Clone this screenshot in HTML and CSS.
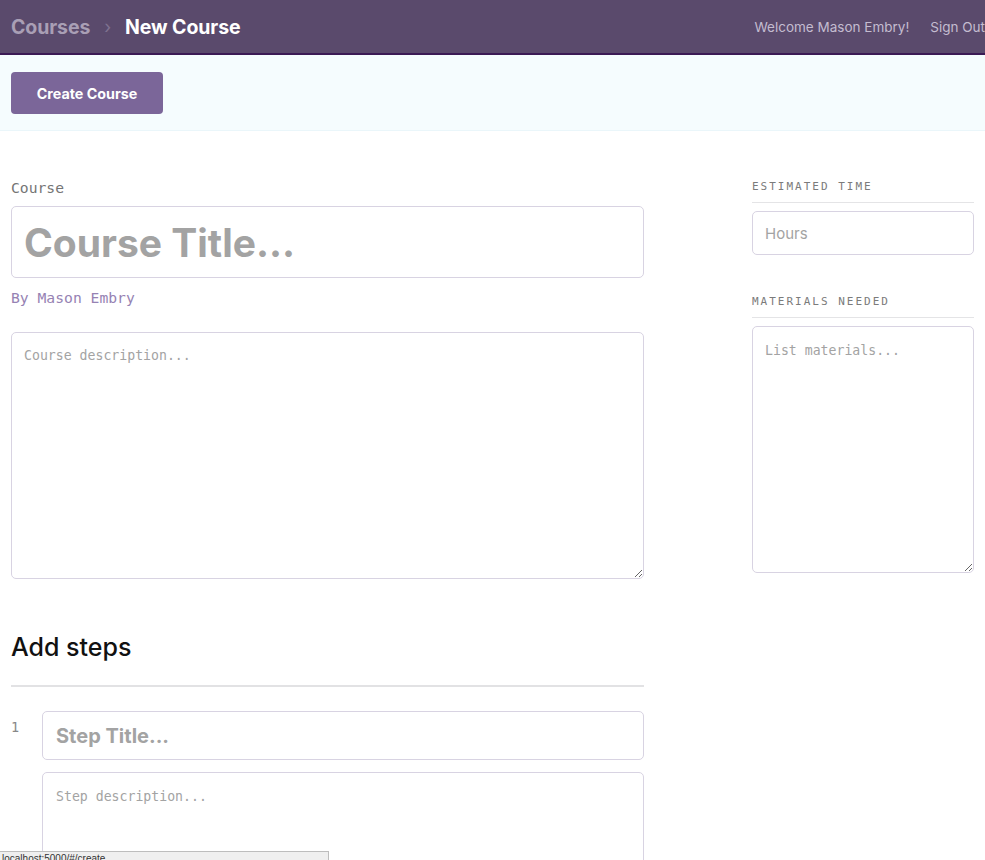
FILE: index.html
```html
<!DOCTYPE html>
<html>
<head>
<meta charset="utf-8">
<link rel="stylesheet" href="styles.css">
</head>
<body>
<header class="topbar">
  <nav class="crumbs">
    <a class="crumb-link">Courses</a>
    <span class="crumb-sep">›</span>
    <span class="crumb-current">New Course</span>
  </nav>
  <div class="user-nav">
    <span class="welcome">Welcome Mason Embry!</span>
    <a class="signout">Sign Out</a>
  </div>
</header>
<div class="actions">
  <button class="btn-primary">Create Course</button>
</div>
<main class="layout">
  <section class="main-col">
    <div class="label">Course</div>
    <input class="title-input" placeholder="Course Title...">
    <div class="byline">By Mason Embry</div>
    <textarea class="desc" placeholder="Course description..."></textarea>
    <h2 class="steps-heading">Add steps</h2>
    <div class="step">
      <div class="step-num">1</div>
      <div class="step-fields">
        <input class="step-title" placeholder="Step Title...">
        <textarea class="step-desc" placeholder="Step description..."></textarea>
      </div>
    </div>
  </section>
  <aside class="side-col">
    <div class="side-block">
      <h4 class="side-heading">Estimated Time</h4>
      <input class="hours" placeholder="Hours">
    </div>
    <div class="side-block">
      <h4 class="side-heading">Materials Needed</h4>
      <textarea class="materials" placeholder="List materials..."></textarea>
    </div>
  </aside>
</main>
<div class="statusbar">localhost:5000/#/create</div>
</body>
</html>
```
FILE: styles.css
```css
html, body { margin: 0; padding: 0; }
body {
  font-family: "Inter", "Noto Sans", sans-serif;
  background: #fff;
  overflow: hidden;
  width: 985px;
  height: 860px;
}
.topbar {
  height: 53px;
  background: #5a4a6c;
  border-bottom: 2px solid #3b1a55;
  display: flex;
  align-items: center;
  justify-content: space-between;
  padding: 0 0 0 11px;
  white-space: nowrap;
}
.crumbs { display: flex; align-items: center; font-weight: 700; font-size: 19.5px; letter-spacing: -0.1px; }
.crumb-link { color: #a99fb5; }
.crumb-sep { color: #7f7290; font-weight: 400; font-size: 18px; margin: 0 14px 0 14px; }
.crumb-current { color: #fff; }
.user-nav { display: flex; gap: 21px; font-size: 13.5px; color: #c4bcd0; margin-right: 0; }
.actions {
  height: 76px;
  background: #f5fcfe;
  border-bottom: 1px solid #eaf6fa;
  padding: 17px 11px 0;
  box-sizing: border-box;
}
.btn-primary {
  width: 152px;
  height: 42px;
  background: #7b6699;
  border: none;
  border-radius: 4px;
  color: #fff;
  font-family: inherit;
  font-weight: 700;
  font-size: 14.3px;
}
.layout {
  display: grid;
  grid-template-columns: 633px 222px;
  column-gap: 108px;
  padding: 49px 11px 0;
}
.main-col { margin-top: -1px; }
.label {
  font-family: "DejaVu Sans Mono", monospace;
  font-size: 14.7px;
  color: #757575;
  line-height: 18px;
}
input, textarea {
  box-sizing: border-box;
  border: 1px solid #d8d3e2;
  border-radius: 5px;
  outline: none;
  background: #fff;
  display: block;
  width: 100%;
  margin: 0;
}
input::placeholder, textarea::placeholder { color: #a3a3a3; opacity: 1; }
.title-input {
  margin-top: 9px;
  height: 72px;
  padding: 0 12px;
  font-family: "Inter", sans-serif;
  font-weight: 700;
  font-size: 39px;
}
.byline {
  font-family: "DejaVu Sans Mono", monospace;
  font-size: 14.7px;
  color: #9682b3;
  margin-top: 11px;
  line-height: 18px;
}
.desc {
  margin-top: 25px;
  height: 247px;
  padding: 15px 12px;
  font-family: "DejaVu Sans Mono", monospace;
  font-size: 13.2px;
  resize: vertical;
}
.steps-heading {
  margin: 48px 0 0;
  font-size: 25px;
  font-weight: 500;
  line-height: 40px;
  color: #111;
  padding-bottom: 18px;
  border-bottom: 2px solid #e2e2e4;
}
.step { display: flex; margin-top: 24px; }
.step-num {
  width: 31px;
  flex: none;
  font-family: "DejaVu Sans Mono", monospace;
  font-size: 13.5px;
  color: #888;
  padding-top: 8px;
}
.step-fields { flex: 1; }
.step-title {
  height: 49px;
  padding: 0 13px;
  font-family: "Inter", sans-serif;
  font-weight: 700;
  font-size: 20px;
}
.step-desc {
  margin-top: 12px;
  height: 120px;
  padding: 16px 13px;
  font-family: "DejaVu Sans Mono", monospace;
  font-size: 13.2px;
}
.side-block { margin-bottom: 40px; }
.side-heading {
  margin: 0;
  font-family: "DejaVu Sans Mono", monospace;
  font-weight: 400;
  font-size: 11px;
  letter-spacing: 2px;
  text-transform: uppercase;
  color: #7b7b7b;
  line-height: 14px;
  padding-bottom: 8px;
  border-bottom: 1px solid #e4e4e6;
}
.hours {
  margin-top: 8px;
  height: 44px;
  padding: 0 12px;
  font-family: "Inter", sans-serif;
  font-size: 15px;
}
.materials {
  margin-top: 8px;
  height: 247px;
  padding: 16px 12px;
  font-family: "DejaVu Sans Mono", monospace;
  font-size: 13.2px;
}
.statusbar {
  position: fixed;
  left: 0;
  bottom: 0;
  width: 326px;
  height: 8px;
  background: #efefef;
  border: 1px solid #bdbdbd;
  border-left: none;
  border-bottom: none;
  font-family: "Liberation Sans", sans-serif;
  font-size: 10px;
  line-height: 14px;
  color: #333;
  overflow: hidden;
  padding-left: 2px;
}
```
